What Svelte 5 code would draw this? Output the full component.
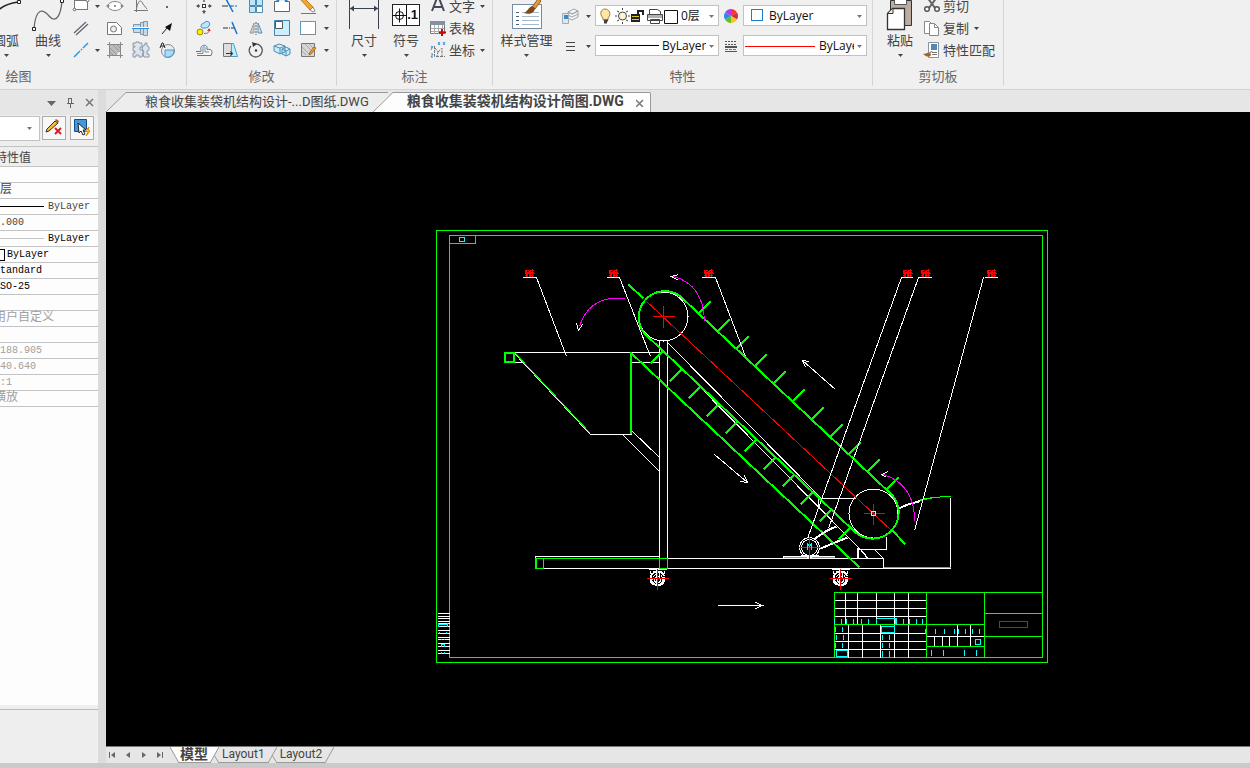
<script>
  const drawTools = [
    ['rect', '矩形'], ['arrow', ''], ['ellipse', '椭圆'], ['graph', '函数曲线'], ['point', '点'],
    ['parallel', '平行线'], null, ['hole', '孔'], ['shaft', '轴'], ['pointer', '引线'],
    ['axis', '中心线'], ['arrow', ''], ['hatch', '剖面线'], ['gear', '齿轮'], ['detail', '局部放大']
  ];
  const editTools = [
    ['move', '移动'], ['trim', '裁剪'], ['array', '阵列'], ['break', '打断'], ['pencil', '删除'], ['arrow', ''],
    ['copyObj', '复制对象'], ['extend', '延伸'], ['mirror', '镜像'], ['scale', '缩放'], ['bounds', '边框'], ['arrow', ''],
    ['offset', '偏移'], ['stretch', '拉伸'], ['rotate', '旋转'], ['blocks', '分解'], ['hatchEdit', '编辑填充'], ['arrow', '']
  ];

  const icons = {
    arrow: '<path d="M7 8h5l-2.500 3z" fill="#444"/>',
    rect: '<rect x="2.500" y="3.500" width="13" height="9" fill="#fff" stroke="#777"/><g fill="#fff" stroke="#666"><circle cx="2.500" cy="12.500" r="1.300"/><circle cx="15.500" cy="3.500" r="1.300"/></g>',
    ellipse: '<ellipse cx="9" cy="9" rx="7" ry="4.500" fill="#fff" stroke="#888"/><g fill="#fff" stroke="#666"><circle cx="2" cy="9" r="1"/><circle cx="16" cy="9" r="1"/><circle cx="9" cy="9" r=".6"/></g>',
    graph: '<path d="M4.500 0v15M2 13.500h14M4.500 12C6 3 9 2 11 7l4 5" fill="none" stroke="#777"/>',
    point: '<rect x="8" y="9" width="2" height="2" fill="#666"/>',
    parallel: '<path d="M2 14 14 3M4 16 16 5" stroke="#667" stroke-width="1.300"/>',
    hole: '<path d="M1.500 3.500h9l5 5v7h-14z" fill="#fff" stroke="#777"/><circle cx="7.500" cy="10" r="3" fill="#eee" stroke="#777"/>',
    shaft: '<path d="M1.500 5.500h7v8h-7zM8.500 3.500h3v12h-3zM11.500 2.500h4v14h-4z" fill="#c9d9e6" stroke="#8496a6"/><path d="M0 9.500h17" stroke="#2b8fe0"/><path d="M1 8.500h15" stroke="#fff"/>',
    pointer: '<path d="M4 15 9 9" stroke="#222"/><path d="m14 4-2 8-5-4z" fill="#111"/>',
    axis: '<path d="M2 16 8 10m1-1 1-1m1-1 5-5" stroke="#259be0" stroke-width="1.500"/>',
    hatch: '<path d="M1 3.500h16M1 14.500h16M3.500 1v16M14.500 1v16" stroke="#888"/><path d="M4 4h10v6l-4 4H4z" fill="#bbb"/><path d="m4 7 7 7M4 11l3 3M7 4l7 7m-3-7 3 3" stroke="#999"/>',
    gear: '<path d="M1 2h3V1h3v1h3v4H8v3h3v2l-1 5H7v-2H4v2H1v-4h2v-2H1V6h2V5H1zM11 5l2-1v-2h2v3l2 1v3l-2 1v3h2v3h-5l-1-3 1-2-2-3z" fill="#dce5ee" stroke="#8b98a6"/>',
    detail: '<circle cx="10" cy="10" r="6.500" fill="#eee" stroke="#888"/><path d="M7 9h9c0 5-4 8-9 7z" fill="#a9dcfa" stroke="#4e99c9"/><path d="m2 7 2-5h1l2 5M3 5h3" fill="none" stroke="#222"/>',
    move: '<rect x="7.500" y="7.500" width="3" height="3" fill="#fff" stroke="#333"/><path d="M9 2v3m0 8v3M2 9h3m8 0h3" stroke="#666" stroke-width="1.500"/><path d="m7 14 2 3 2-3zM4 7 1 9l3 2zm10 0 3 2-3 2z" fill="#555"/>',
    trim: '<path d="M1 9h6m2 0h2" stroke="#333"/><path d="m5 2 7 13" stroke="#1672cc" stroke-width="1.500"/><path d="M11 9h6" stroke="#3da0e8" stroke-width="1.500" stroke-dasharray="2 1"/>',
    array: '<path d="M2.500 2.500h6v6h-6zM9.500 2.500h6v6h-6zM2.500 9.500h6v6h-6z" fill="#bce7fa" stroke="#4e89ae"/><path d="M9.500 9.500h6v6h-6z" fill="#fff" stroke="#4e89ae"/>',
    break: '<path d="M6 4.500H1.500v10h15v-10H12" fill="#fff" stroke="#666"/><path d="m3 2 4 1-3 2zm12 0-4 1 3 2z" fill="#1d87d0"/>',
    pencil: '<path d="m2 3 3-2 9 9-3 3z" fill="#f2a52f" stroke="#b97a26"/><path d="m11 13 3-3 2 4-2 1z" fill="#fff" stroke="#888"/><path d="M2 16.500h15" stroke="#777"/>',
    copyObj: '<circle cx="5" cy="13" r="3" fill="#ffec00" stroke="#958a19"/><path d="M6 7c0-3 3-2 4-4 3-2 6 1 4 4-2 2-3 2-5 2-3 0-3-1-3-2z" fill="#bce7fa" stroke="#3f8fc4"/><path d="M9 14.500c4 0 5-1 5-3" fill="none" stroke="#b94e40"/><path d="m12 12 2-3 2 3z" fill="#b94e40"/>',
    extend: '<path d="M2 9h5m1 0h1m1 0h3" stroke="#333"/><path d="m11 3 5 12" stroke="#1672cc" stroke-width="1.500"/>',
    mirror: '<path d="M7 4v10H3z" fill="#ccc" stroke="#999"/><path d="M11 4v10h4z" fill="#bce7fa" stroke="#5c8daf"/><path d="M9 3v13" stroke="#555" stroke-dasharray="2 1"/>',
    scale: '<path d="M1.500 1.500h15v15h-15z" fill="#caf0ff" stroke="#4583a8"/><path d="M2.500 2.500h7v7h-7z" fill="#fff" stroke="#555"/>',
    bounds: '<rect x="1.500" y="2.500" width="15" height="13" fill="#fff" stroke="#888"/><path d="M1.500 15V2.500H17" fill="none" stroke="#3caae7" stroke-dasharray="4 2"/>',
    offset: '<path d="M1 10.500h5c1-1-1-2 0-4 1-3 6-3 6 0v2c5-1 6 2 4 6H2" fill="#f8f8f8" stroke="#3a80af"/><path d="M2 12.500h6V7c0-2 2-2 2 0v4h4" fill="none" stroke="#888"/>',
    stretch: '<path d="M2.500 2.500h8v13h-8z" fill="#ddd" stroke="#777"/><path d="M10.500 2.500h2l4 13h-6z" fill="#bcecff" stroke="#49a0cc"/><path d="M5 12.500h6m-2-2 3 2-3 2" fill="none" stroke="#333"/>',
    rotate: '<path d="M8 3a6.500 6.500 0 1 1-4 2" fill="none" stroke="#555" stroke-width="1.300"/><path d="m5 1 5 2-4 3z" fill="#333"/><circle cx="9" cy="9.500" r="1.200" fill="#333"/>',
    blocks: '<path d="M1 5l5-2 6 2v6l-5 2-6-3zm0 0 6 2 5-2M7 7v6M9 8l4-2 4 2v5l-4 2-4-2zm0 0 4 2 4-2m-4 2v5" fill="#c8edfa" stroke="#4a8fb5"/>',
    hatchEdit: '<path d="M2.500 2.500h13v13h-13z" fill="#d5d5d5" stroke="#777"/><path d="m3 6 8 8M3 10l4 4M6 3l8 8m-4-8 4 4" stroke="#aaa"/><path d="m15 6 2 1-5 6-2 1 1-3z" fill="#eea52c" stroke="#a36c28"/>',
    text: '<path d="m3 14 5-13h2l5 13M5 10h8" fill="none" stroke="#444b57" stroke-width="2"/>',
    table: '<path d="M1.500 3.500h14v11h-14z" fill="#fff" stroke="#777"/><path d="M1 2h15v4H1z" fill="#8292a0"/><path d="M5.500 6v9m4-9v9m4-9v9M2 9.500h13m-13 3h13" stroke="#aaa"/><path d="M13 10v7m-3-3.500h7" stroke="#c30909" stroke-width="2"/>',
    coord: '<path d="M5.500 5v10.500H16M6 7l3 4-1 4m1-4 4-4v8" fill="none" stroke="#777" stroke-dasharray="3 1"/><path d="m2 5 1 2m1-2-2 4m7-8 2 3m0-3-2 3m5-3 2 3m0-3-2 3M2 13h2l-2 3h2" fill="none" stroke="#3e94d4"/>',
    cut: '<path d="m4 0 8 11M14 0 6 11" stroke="#666" stroke-width="2"/><g fill="#fff" stroke="#555" stroke-width="1.500"><circle cx="4" cy="12" r="2.300"/><circle cx="14" cy="12" r="2.300"/></g>',
    copy: '<path d="M1.500 2.500h5l3 3v9h-8z" fill="#fff" stroke="#888"/><path d="M6.500 4.500h5l4 4v8h-9z" fill="#fff" stroke="#888"/><path d="M11.500 5v3.500H15" fill="none" stroke="#888"/>',
    match: '<path d="M5.500 1.500h10v15h-10z" fill="#fff" stroke="#8a949c"/><path d="M8 3h6v6H8z" fill="#5387b5"/><path d="M9 11.500h5m-5 2h5" stroke="#777"/><path d="m8 10-3 2 1 2 4-4z" fill="#999"/><path d="M6 12c-2-1-3 1-6 1 3 3 8 4 8 0z" fill="#a56423"/>',
    layers: '<path d="m7 5 6-3 4 2-6 3zm0 3v-3l4 2 6-3v3l-6 3zm0 3 4 2 6-3v-3" fill="#f7f7f7" stroke="#9aa3ac"/><path d="M1.500 6.500h6v10h-6z" fill="#dfe8f0" stroke="#9aabba"/><path d="M3 8h4v4H3z" fill="#3e87c1"/>',
    lines: '<path d="M5 5.500h9M5 9.500h9M5 13.500h9" stroke="#444"/>',
    lineTypes: '<path d="M3 4.500h12M3 7.500h12" stroke="#555" stroke-dasharray="2 1"/><path d="M3 9.500h12M3 10.500h12M3 14.500h12" stroke="#555"/><path d="M3 12.500h12" stroke="#777" stroke-dasharray="3 1"/>',
    wheel: '<path d="M9 9V2a7 7 0 0 1 6 3.500z" fill="#f33"/><path d="M9 9l6-3.500a7 7 0 0 1 0 7z" fill="#cc3046"/><path d="m9 9 6 3.500A7 7 0 0 1 9 16z" fill="#f9c718"/><path d="M9 9v7a7 7 0 0 1-6-3.500z" fill="#62bd2c"/><path d="m9 9-6 3.500a7 7 0 0 1 0-7z" fill="#238ee8"/><path d="M9 9 3 5.500A7 7 0 0 1 9 2z" fill="#b33ded"/>'
  };

  const bigIcons = {
    arc: '<path d="M4 20Q10 6 30 3" fill="none" stroke="#222" stroke-width="1.500"/><path d="M29.500 1.500h3v3h-3z" fill="#fff" stroke="#222"/>',
    curve: '<path d="M4 29C6 8 13 10 19 17c8 9 12-3 13-15" fill="none" stroke="#666" stroke-width="1.300"/><path d="M2.500 28.500h3v3h-3zM30.500.5h3v3h-3z" fill="#fff" stroke="#222"/>',
    dim: '<path d="M3.500 0v30m29-30v30" stroke="#39424e"/><path d="M4 9.500h28" stroke="#39424e"/><path d="m4 9.500 4-3v6zm28 0-4-3v6z" fill="#39424e"/>',
    symbol: '<rect x="4.500" y="5.500" width="27" height="21" fill="#fff" stroke="#222"/><path d="M18.500 6v20M5 16.500h13m-6.500-7v14" stroke="#111"/><circle cx="11.500" cy="16.500" r="4" fill="none" stroke="#111"/>',
    style: '<rect x="3.500" y="5.500" width="29" height="24" fill="#fff" stroke="#758ba3"/><path d="M7 13.500h3m-3 4h3m-3 4h3m-3 4h3" stroke="#49627c"/><path d="M13 13.500h17m-17 4h17m-17 4h17m-17 4h17" stroke="#a9b8c9"/><path d="m23 8 6-8 3 2-6 8z" fill="#e39b36" stroke="#8f5b24"/><path d="M26 9c0 5-6 7-11 5 3-1 4-5 8-7z" fill="#7c4a1d"/>',
    paste: '<path d="M8.500 1.500h21v25h-21z" fill="#baada0" stroke="#333"/><path d="M12.500.5h12v5h-12z" fill="#fff" stroke="#555"/><path d="M5.500 14.500l5-5h12v21h-17z" fill="#fff" stroke="#333" stroke-width="1.300"/><path d="M6 14.500h5v-5" fill="#eee" stroke="#333"/>'
  };

  const rows = [
    { kind: 'empty' },
    { text: '层', cjk: true },
    { kind: 'line', text: 'ByLayer' },
    { text: '.000' },
    { kind: 'faint', text: 'ByLayer' },
    { kind: 'swatch', text: 'ByLayer' },
    { text: 'tandard', dark: true },
    { text: 'SO-25', dark: true },
    { kind: 'empty' },
    { text: '用户自定义', dim: true, cut: true },
    { kind: 'empty' },
    { text: '188.905', dim: true },
    { text: '40.640', dim: true },
    { text: ':1', dim: true },
    { text: '横放', dim: true, cut: true }
  ];

  // the conveyor carries eleven cleats on each run of the belt
  const cleats = Array.from({ length: 11 }, (_, i) => [Math.round(i * 18.8), Math.round(i * 17.6)]);

  // label x, underline end, leader start x, leader end
  const leaders = [
    [522, 536, 536, 566, 356],
    [606, 619, 619, 650, 356],
    [701, 715, 715, 745, 356],
    [900, 912, 901, 807, 538],
    [918, 931, 918, 828, 528],
    [984, 997, 983, 914, 530]
  ];

  const ticks = [
    [618, 5, [834, 841, 846, 853, 861, 868, 876, 895, 896, 903, 909, 916, 922]],
    [626, 5, [835, 842]],
    [634, 5, [836, 843, 882, 889]],
    [642, 5, [835, 842, 882, 889]],
    [650, 6, [882, 889]],
    [628, 5, [925, 935, 944, 954, 958, 965, 972, 979]],
    [649, 6, [931, 943, 964, 976]]
  ];

  const stripLines = [613, 616, 618, 621, 623, 626, 630, 633, 637, 639, 643, 646, 650, 653];

  let activeLayout = $state('模型');
</script>

{#snippet icon(name)}
  <svg class="icon" width="18" height="18" viewBox="0 0 18 18" fill="none" aria-hidden="true">{@html icons[name]}</svg>
{/snippet}

{#snippet big(name, label)}
  <button class="big">
    <span class="big-pic">
      <svg width="36" height="32" viewBox="0 0 36 32" fill="none" aria-hidden="true">{@html bigIcons[name]}</svg>
      {#if name === 'symbol'}<b>.1</b>{/if}
    </span>
    <span class="label">{label}</span>
    <svg class="drop" width="5" height="3" viewBox="0 0 5 3"><path d="M0 0h5L2.500 3z" fill="#444" /></svg>
  </button>
{/snippet}

{#snippet row(name, label, drop = false)}
  <button class="row-btn">
    {@render icon(name)}<span>{label}</span>
    {#if drop}<svg class="drop" width="5" height="3" viewBox="0 0 5 3"><path d="M0 0h5L2.500 3z" fill="#444" /></svg>{/if}
  </button>
{/snippet}

{#snippet tools(list)}
  {#each list as tool}
    {#if tool}
      <button class="tool" aria-label={tool[1] || '更多'}>{@render icon(tool[0])}</button>
    {:else}
      <span></span>
    {/if}
  {/each}
{/snippet}

{#snippet comboArrow()}
  <svg class="combo-arrow" width="5" height="3" viewBox="0 0 5 3"><path d="M0 0h5L2.500 3z" fill="#777" /></svg>
{/snippet}

{#snippet caster(x)}
  <g>
    <path d="M{x - 9} 569h18M{x - 7} 570v3h3v-3M{x + 7} 570v3l-3 2M{x - 1} 569v14M{x + 2} 570v8" />
    <circle cx={x} cy="578" r="7" stroke-width="2" stroke-dasharray="13 1" />
    <circle cx={x} cy="579" r="5" stroke-dasharray="2 1" />
    <circle cx={x} cy="579" r="3" />
    <path class="red" d="M{x - 11} 578h22M{x} 568v21" />
  </g>
{/snippet}

<div class="app">
  <header class="ribbon">
    <section class="group draw">
      <div class="group-body">
        {@render big('arc', '圆弧')}
        {@render big('curve', '曲线')}
        <div class="grid draw-grid">{@render tools(drawTools)}</div>
      </div>
      <h2>绘图</h2>
    </section>

    <section class="group edit">
      <div class="group-body">
        <div class="grid edit-grid">{@render tools(editTools)}</div>
      </div>
      <h2>修改</h2>
    </section>

    <section class="group note">
      <div class="group-body">
        {@render big('dim', '尺寸')}
        {@render big('symbol', '符号')}
        <div class="list">
          {@render row('text', '文字', true)}
          {@render row('table', '表格')}
          {@render row('coord', '坐标', true)}
        </div>
      </div>
      <h2>标注</h2>
    </section>

    <section class="group props">
      <div class="group-body">
        {@render big('style', '样式管理')}
        <div class="prop-grid">
          <button class="tool" aria-label="图层管理">{@render icon('layers')}</button>
          <button class="tool" aria-label="图层列表">{@render icon('arrow')}</button>
          <div class="combo layer">
            <select aria-label="图层"><option>0层</option></select>
            <svg class="combo-pic" width="84" height="19" viewBox="0 0 84 19" fill="none">
              <path d="M7 12C3 8 5 3 9 3s7 5 3 9v2H7z" fill="#ffe9a1" stroke="#9b7b41" />
              <path d="M8 14.500h4M8 16.500h3" stroke="#444" stroke-width="2" />
              <circle cx="26.500" cy="10" r="4" fill="#fff5d2" stroke="#444" />
              <path d="M26.500 2v2m0 12v2M19 10h2m11 0h2M21 5l2 1m-2 9 2-1m9-9-2 1m2 9-2-1" stroke="#444" />
              <path d="M35 8h9v8h-9z" fill="#222" /><path d="M36 10.500h7m-7 3h7" stroke="#dfcb1d" />
              <path d="M42 9V5h5v4" stroke="#222" stroke-width="2" />
              <path d="M53.500 8V3.500h8l3 2V9M51.500 8.500h15v6h-15zM54.500 13.500h9v4h-9z" fill="#fff" stroke="#444" />
              <path d="M52 9h14v3H52z" fill="#a9b1bb" />
              <path d="M68.500 4.500h13v13h-13z" fill="#fff" stroke="#111" />
            </svg>
            {@render comboArrow()}
          </div>
          <button class="tool" aria-label="颜色">{@render icon('wheel')}</button>
          <div class="combo color">
            <select aria-label="对象颜色"><option>ByLayer</option></select>
            <svg class="combo-pic" width="24" height="19" viewBox="0 0 24 19"><rect x="7.500" y="3.500" width="11" height="11" fill="#fff" stroke="#1c7ed0" /></svg>
            {@render comboArrow()}
          </div>
          <button class="tool" aria-label="线宽设置">{@render icon('lines')}</button>
          <button class="tool" aria-label="线宽列表">{@render icon('arrow')}</button>
          <div class="combo weight">
            <select aria-label="线型"><option>ByLayer</option></select>
            <svg class="combo-pic" width="64" height="19" viewBox="0 0 64 19"><path d="M4 9.500h59" stroke="#000" /></svg>
            {@render comboArrow()}
          </div>
          <button class="tool" aria-label="线型管理">{@render icon('lineTypes')}</button>
          <div class="combo ltype">
            <select aria-label="线宽"><option>ByLayer</option></select>
            <svg class="combo-pic" width="72" height="19" viewBox="0 0 72 19"><path d="M1 10.500h70" stroke="#f00" /></svg>
            {@render comboArrow()}
          </div>
        </div>
      </div>
      <h2>特性</h2>
    </section>

    <section class="group clip">
      <div class="group-body">
        {@render big('paste', '粘贴')}
        <div class="list">
          {@render row('cut', '剪切')}
          {@render row('copy', '复制', true)}
          {@render row('match', '特性匹配')}
        </div>
      </div>
      <h2>剪切板</h2>
    </section>
  </header>

  <div class="work">
    <aside class="panel">
      <div class="panel-head">
        <button aria-label="菜单"><svg width="12" height="12" viewBox="0 0 12 12"><path d="M2 4h9L6.500 9z" fill="#666" /></svg></button>
        <button aria-label="固定"><svg width="12" height="12" viewBox="0 0 12 12" fill="none" stroke="#666"><path d="M4.500 1v5M4 1.500h4M7.500 1v5M3 6.500h7M6.500 7v4" /></svg></button>
        <button aria-label="关闭面板"><svg width="12" height="12" viewBox="0 0 12 12" stroke="#777" stroke-width="1.500"><path d="m3 2 7 7M10 2l-7 7" /></svg></button>
      </div>
      <div class="panel-tools">
        <div class="combo pick">
          <select aria-label="选择对象"><option></option></select>
          {@render comboArrow()}
        </div>
        <button aria-label="清除选择">
          <svg width="20" height="20" viewBox="0 0 20 20"><path d="m3 11 8-8 3 2-9 8-3 1z" fill="#f4bd42" stroke="#432b14" /><path d="m11 2 1-1 3 2-1 2z" fill="#b55432" /><path d="m11 10 6 6m0-6-6 6" stroke="#d81f1f" stroke-width="2" /></svg>
        </button>
        <button aria-label="快速选择">
          <svg width="20" height="20" viewBox="0 0 20 20"><path d="M2.500 1.500h12v12h-12z" fill="#4098df" stroke="#174b83" /><path d="m6 5 1 10 2-2 2 4 2-1-2-4h3z" fill="#fff" stroke="#222" /><path d="m17 9-4 4 3 1-2 4 4-5-2-1z" fill="#fcbd22" stroke="#e48800" /></svg>
        </button>
      </div>
      <div class="sheet">
        <table>
          <thead><tr><th>特性值</th></tr></thead>
          <tbody>
            {#each rows as r}
              <tr>
                <td class:dim={r.dim} class:dark={r.dark || r.kind === 'faint' || r.kind === 'swatch'} class:cut={r.cut} class:cjk={r.cjk}>
                  <div class="value">
                    {#if r.kind === 'line' || r.kind === 'faint'}<i class="sample {r.kind}"></i>{/if}
                    {#if r.kind === 'swatch'}<i class="swatch"></i>{/if}
                    {r.text ?? ''}
                  </div>
                </td>
              </tr>
            {/each}
          </tbody>
        </table>
      </div>
      <div class="hint"></div>
    </aside>

    <main>
      <nav class="doc-tabs" aria-label="图纸">
        <button class="doc">
          <svg width="21" height="20" viewBox="0 0 21 20"><path d="M0 20 20 .5h1V20z" fill="#ededed" /><path d="M0 20 20 .5h1" fill="none" stroke="#999" /></svg>
          <span>粮食收集装袋机结构设计-...D图纸.DWG</span>
        </button>
        <div class="doc active">
          <svg width="21" height="20" viewBox="0 0 21 20"><path d="M0 20 20 .5h1V20z" fill="#fdfdfd" /><path d="M0 20 20 .5h1" fill="none" stroke="#999" /></svg>
          <span>粮食收集装袋机结构设计简图.DWG</span>
          <button aria-label="关闭图纸"><svg width="8" height="8" viewBox="0 0 8 8" stroke="#777" stroke-width="1.500"><path d="m0 1 7 7m0-7L0 8" /></svg></button>
        </div>
      </nav>

      <div class="canvas">
        <svg viewBox="106 112 1144 634" fill="none" shape-rendering="crispEdges" role="img" aria-label="粮食收集装袋机结构设计简图">
          <g class="sheet-lines" transform="translate(.5 .5)">
            <!-- frame -->
            <path class="green" d="M436 230h611v432H436zM449 235h593v422H449zM449 243h26v-8" />
            <path class="cyan" d="M459 237h5v4h-5z" />

            <!-- machine frame and hopper -->
            <path d="M504 352h159M504 362h18M514 353l76 81h41M631 362h28M631 430l28 27M622 434l37 37" />
            <path d="M659 558V340h8v218M535 568v-12h124M667 558h216v10M535 568h348" />
            <path d="M667 342 822 499M687 374 858 547 868 558M818 508v-10h37" />
            <path d="M858 547v11M857 547v11M858 549h28v-13M860 549l7 9M875 550l8 8" />
            <path d="M783 558v-2h51v2M950 497v71h-67" />
            <path d="M899 507q10-5 21-7M899 508q10-5 21-7" />
            <path class="green thick" d="M505 353h9v9h-9zM631 353v81M631 353 860 568M629 285l15 14M892 530l14 15" />
            <path class="green" d="M514 352l76 81M535 558h132v10h-8v-10M535 568v-10h8v10zM536 558v10M783 557h51M883 567h67M920 500q15-4 30-4M920 499q15-3 30-3" />

            <!-- conveyor -->
            <circle cx="663" cy="316" r="24.500" />
            <circle cx="873" cy="513" r="24.500" />
            <path class="green belt" d="M681 297 891 494A26 26 0 0 1 855 532L645 334A26 26 0 0 1 681 297" />
            {#each cleats as [dx, dy]}
              <path class="green thick" d="M{699 + dx} {314 + dy}l12-12M{663 + dx} {352 + dy}l-12 12" />
            {/each}
            <path class="red" d="M644 299 891 530M652 316h22M663 305v22M863 513h21M873 503v21" />
            <path class="yellow" d="M871 511h4v4h-4z" />

            <!-- motor -->
            <path d="M815 538q10-8 21-12M820 548l27-11" stroke-width="2" />
            <circle cx="809" cy="547" r="10" />
            <circle cx="809" cy="547" r="8" />
            <path d="M800 555h18" />
            <path class="red" d="M798 547h22M809 536v22" />
            <path class="cyan" d="M807 549v-6l2 3 2-3v6" />
            {@render caster(657)}
            {@render caster(840)}

            <!-- direction arrows -->
            <path class="magenta" d="M625 298Q589 294 579 326M673 276Q703 284 704 321M883 474Q914 484 914 520" />
            <path d="M576 323l2 7 4-6M678 274l-7 2 7 4M888 471l-7 3 5 3" />
            <path d="M835 389 802 360M809 361l-7-1 3 7M714 454l33 28M740 481l7 1-3-7M717 605h45M755 602l7 3-7 3" />

            <!-- leaders -->
            {#each leaders as [x1, x2, sx, ex, ey]}
              <path d="M{x1} 277H{x2}M{sx} 277 {ex} {ey}" />
              <path class="red" d="M{x1 + 2} 270h4m2 0h3M{x1 + 2} 272h9M{x1 + 2} 273h10M{x1 + 2} 275h3m3 0h3M{x1 + 3} 269v3M{x1 + 4} 269v7M{x1 + 5} 271v5M{x1 + 7} 270v6M{x1 + 8} 269v7M{x1 + 10} 268v8" />
            {/each}

            <!-- title block -->
            <path d="M834 600h92M834 608h92M834 616h92M834 633h92M834 641h92M834 649h92M926 636h58" />
            <path d="M845 592v32M857 592v32M876 592v32M894 592v32M908 592v32M848 624v33M862 624v33M880 624v33M894 624v33M908 624v33" />
            <path d="M957 624v12M970 624v22M934 636v10M942 636v10M949 636v10M957 636v10" />
            <path class="green" d="M834 657v-65h208M926 592v65M984 592v65M834 624h150M926 646h58M984 613h58M984 636h58" />
            <path class="cyan" d="M876 618h20v6M881 626h13v6h-13zM836 650h11v6h-11zM975 639h5v5h-5z" />
            {#each ticks as [y, h, xs]}
              {#each xs as x}<path class="cyan" d="M{x} {y}v{h}" />{/each}
            {/each}
            <path class="red" d="M999 621h28v6h-28z" />

            <!-- binding strip -->
            {#each stripLines as y}<path d="M437 {y}h12" />{/each}
            <path class="cyan" d="M438 622v4m0-2h9m0-2v4M439 631v2M446 631v2M441 638v1M444 638v1M441 646v-2h3v2M441 651v2M444 651v2" />
          </g>
        </svg>
      </div>

      <nav class="layouts" aria-label="布局">
        <div class="steps">
          <button aria-label="第一个"><svg width="8" height="8" viewBox="0 0 8 8"><path d="M1 1h1v6H1zM7 1v6L3 4z" fill="#666" /></svg></button>
          <button aria-label="上一个"><svg width="8" height="8" viewBox="0 0 8 8"><path d="M6 1v6L2 4z" fill="#666" /></svg></button>
          <button aria-label="下一个"><svg width="8" height="8" viewBox="0 0 8 8"><path d="M2 1v6l4-3z" fill="#666" /></svg></button>
          <button aria-label="最后一个"><svg width="8" height="8" viewBox="0 0 8 8"><path d="M6 1h1v6H6zM1 1v6l4-3z" fill="#666" /></svg></button>
        </div>
        {#each ['模型', 'Layout1', 'Layout2'] as name, i}
          <button class="layout" class:active={activeLayout === name} onclick={() => (activeLayout = name)}>
            {#if i === 0}
              <svg width="9" height="16" viewBox="0 0 9 16"><path class="fill" d="M0 0h9v16z" /><path class="edge" d="m0 0 9 16" /></svg>
            {:else}
              <svg width="5" height="16" viewBox="0 0 5 16"><path class="edge" d="m0 8 5 8" /></svg>
            {/if}
            <span>{name}</span>
            <svg width="9" height="16" viewBox="0 0 9 16"><path class="fill" d="M0 0h9L0 16z" /><path class="edge" d="M9 0 0 16" /></svg>
          </button>
        {/each}
      </nav>
    </main>
  </div>
  <footer></footer>
</div>

<style>
  :global(body){ background:#e6e6e6; }
  *{ box-sizing:border-box; }
  .app{
    height:100vh;
    display:flex;
    flex-direction:column;
    overflow:hidden;
    font-family:"Open Sans","Noto Sans CJK SC",sans-serif;
    font-size:13px;
    color:#444;
  }
  button{
    border:0;
    padding:0;
    background:none;
    font:inherit;
    color:inherit;
    display:flex;
    align-items:center;
    justify-content:center;
  }
  svg{ display:block; flex-shrink:0; }

  /* ribbon */
  .ribbon{
    display:flex;
    height:90px;
    flex-shrink:0;
    overflow:hidden;
    background:#f0f0f0;
    border-bottom:1px solid #d2d2d2;
  }
  .group{
    height:86px;
    flex-shrink:0;
    border-right:1px solid #d4d4d4;
  }
  .draw{ width:336px; margin-left:-149px; }
  .edit{ width:150px; }
  .note{ width:156px; }
  .props{ width:380px; }
  .clip{ width:131px; }
  .group-body{
    display:flex;
    height:66px;
    margin-top:-5px;
  }
  .draw .group-body{ justify-content:flex-end; padding-right:6px; }
  .edit .group-body{ padding-left:4px; }
  .note .group-body{ padding-left:6px; }
  .clip .group-body{ padding-left:6px; }
  h2{
    margin:0;
    font-size:13px;
    font-weight:400;
    line-height:30px;
    text-align:center;
    color:#666;
  }
  .grid{ display:grid; grid-auto-rows:22px; }
  .draw-grid{ grid-template-columns:23px 10px 26px 26px 26px; }
  .edit-grid{ grid-template-columns:repeat(5,26px) 10px; }
  .tool{ min-width:0; overflow:visible; }

  .big{
    width:42px;
    flex-direction:column;
    justify-content:flex-start;
    flex-shrink:0;
  }
  .props .big{ width:67px; }
  .big-pic{ position:relative; margin-top:4px; }
  .big-pic b{
    position:absolute;
    right:6px;
    top:7px;
    font:700 13px/18px "Liberation Sans",sans-serif;
    color:#111;
  }
  .label{ line-height:18px; white-space:nowrap; }
  .big .drop{ margin-top:5px; }
  .list{ display:grid; grid-auto-rows:22px; justify-items:start; }
  .note .list{ padding-left:2px; }
  .clip .list{ padding-left:2px; }
  .row-btn{ gap:2px; white-space:nowrap; }
  .row-btn span{ padding-bottom:2px; }
  .row-btn .drop{ margin-left:3px; }

  .prop-grid{
    display:grid;
    grid-template-columns:20px 15px 124px 24px 124px;
    grid-auto-rows:22px;
    row-gap:8px;
    padding-top:10px;
  }
  .combo{
    position:relative;
    height:21px;
    background:#fff;
    border:1px solid #c2c2c2;
  }
  .combo select{
    appearance:none;
    display:block;
    width:calc(100% - 12px);
    height:100%;
    border:0;
    margin:0;
    padding:0;
    background:none;
    color:#111;
    font:12px "Open Sans","Noto Sans CJK SC",sans-serif;
    overflow:hidden;
    text-overflow:clip;
  }
  .combo.layer select{ padding-left:85px; }
  .combo.color select{ padding-left:25px; }
  .combo.weight select{ padding-left:66px; }
  .combo.ltype select{ padding-left:75px; }
  .combo-pic{ position:absolute; left:0; top:0; pointer-events:none; }
  .combo-arrow{ position:absolute; right:4px; top:50%; margin-top:-1px; pointer-events:none; }

  /* work area */
  .work{ display:flex; flex:1; min-height:0; }
  .panel{
    width:106px;
    flex-shrink:0;
    display:flex;
    flex-direction:column;
    overflow:hidden;
    background:#eee;
    border-right:8px solid #dcdcdc;
  }
  .panel-head{
    display:flex;
    justify-content:flex-end;
    gap:7px;
    padding-right:3px;
    height:25px;
    background:#e6e6e6;
  }
  .panel-tools{
    display:flex;
    gap:4px;
    height:26px;
    align-items:center;
  }
  .panel-tools button{
    width:24px;
    height:24px;
    border:1px solid #acacac;
    background:#f8f8f8;
  }
  .pick{ width:40px; height:25px; margin-right:-2px; border-left:0; }
  .pick .combo-arrow{ right:7px; }
  .sheet{
    flex:1;
    min-height:0;
    overflow:hidden;
    margin-top:5px;
    border-top:1px solid #c3c3c3;
    background:#fdfdfd;
  }
  table{
    width:calc(100% + 6px);
    margin-left:-6px;
    border-collapse:separate;
    border-spacing:0;
    font:10px "Liberation Mono","Noto Sans CJK SC",monospace;
  }
  th{
    height:20px;
    padding:0 0 0 1px;
    text-align:left;
    font:12px "Noto Sans CJK SC",sans-serif;
    line-height:18px;
    background:#eee;
    border-bottom:1px solid #c3c3c3;
  }
  td{
    height:16px;
    padding:0 0 0 6px;
    border-bottom:1px solid #c3c3c3;
    white-space:nowrap;
  }
  .value{ display:flex; align-items:center; height:15px; line-height:15px; }
  td.cut{ padding-left:0; font-size:12px; }
  td.cjk{ font-size:12px; }
  td.dim{ color:#a0a0a0; }
  td.dark{ color:#000; }
  .sample{ width:44px; margin-right:4px; border-top:1px solid #000; }
  .sample.faint{ border-color:#c3c3c3; }
  .swatch{ width:5px; height:12px; margin-right:2px; border:1px solid #000; border-left:0; }
  .hint{ height:54px; margin-top:4px; border-top:1px solid #bbb; flex-shrink:0; }

  main{ flex:1; min-width:0; display:flex; flex-direction:column; }
  .doc-tabs{
    display:flex;
    align-items:flex-end;
    height:22px;
    overflow:hidden;
    background:#e6e6e6;
    font-family:Roboto,"Noto Sans CJK SC",sans-serif;
  }
  .doc{ display:flex; align-items:flex-end; height:20px; line-height:17px; white-space:nowrap; }
  .doc > span{ padding:0 19px 0 18px; background:#ededed; border-top:1px solid #999; height:20px; }
  .doc.active{
    margin-left:-15px;
    position:relative;
    font-weight:700;
  }
  .doc.active > span{ padding:0 12px 0 13px; background:#fdfdfd; font-size:14px; }
  .doc.active > button{
    height:20px;
    padding-right:6px;
    background:#fdfdfd;
    border:solid #999;
    border-width:1px 1px 0 0;
    border-radius:0 2px 0 0;
  }
  .canvas{ flex:1; min-height:0; background:#000; }
  .canvas svg{ width:100%; height:100%; }
  .sheet-lines{ stroke:#fff; stroke-width:1; }
  .green{ stroke:#0f0; }
  .thick, .belt{ stroke-width:2; transform:translate(-1px,-1px); }
  .red{ stroke:#f00; }
  .cyan{ stroke:#0ff; }
  .magenta{ stroke:#f0f; }
  .yellow{ stroke:#ff0; }

  .layouts{
    display:flex;
    height:17px;
    border-top:1px solid #777;
    background:#e6e6e6;
    font:12px/15px Roboto,"Noto Sans CJK SC",sans-serif;
  }
  .steps{ display:flex; width:64px; gap:8px; padding-left:2px; flex-shrink:0; }
  .layout{ align-items:stretch; margin-left:-5px; }
  .steps + .layout{ margin-left:0; }
  .layout span{ padding:0 3px; border-bottom:1px solid #999; }
  .layout.active span{ padding:0 2px 0 1px; background:#fdfdfd; font-size:14px; font-weight:700; line-height:14px; }
  .layout .edge{ stroke:#999; fill:none; }
  .layout .fill{ fill:none; }
  .layout.active .fill{ fill:#fdfdfd; }
  footer{ height:5px; background:#cacaca; flex-shrink:0; }
</style>
